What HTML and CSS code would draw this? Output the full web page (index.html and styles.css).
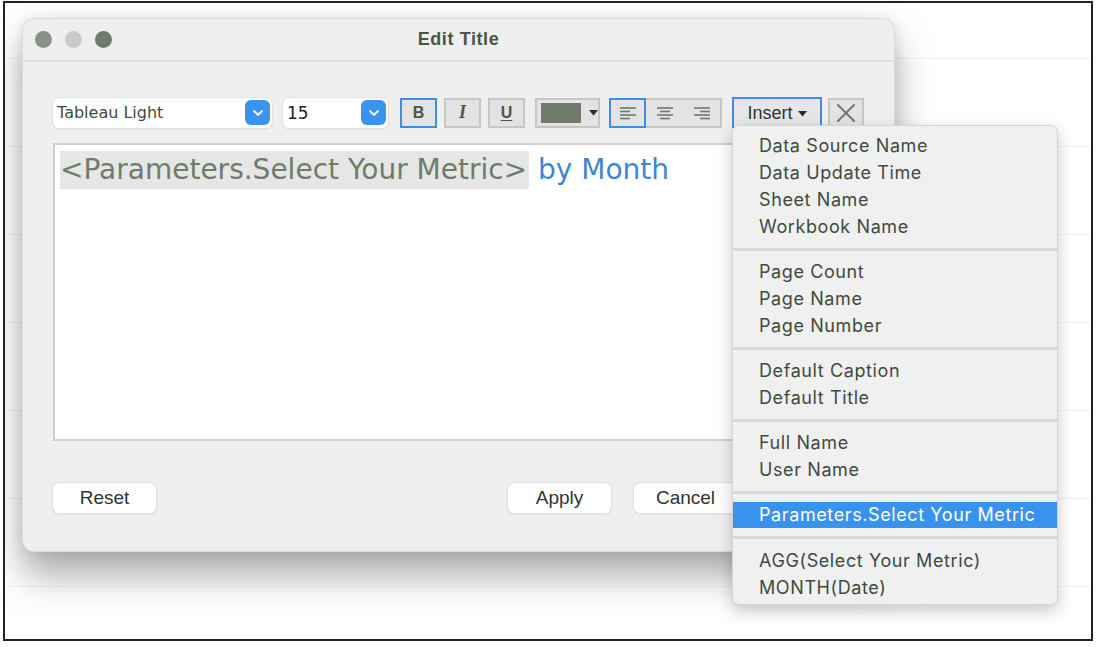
FILE: index.html
```html
<!DOCTYPE html>
<html>
<head>
<meta charset="utf-8">
<link rel="stylesheet" href="styles.css">
</head>
<body>
<div class="frame">
  <div class="window">
    <div class="titlebar">
      <div class="lights">
        <span class="light l1"></span>
        <span class="light l2"></span>
        <span class="light l3"></span>
      </div>
      <div class="title">Edit Title</div>
    </div>
    <div class="content">
      <div class="toolbar">
        <div class="select font-select">
          <span class="select-text">Tableau Light</span>
          <span class="chev"><svg width="12" height="8" viewBox="0 0 12 8"><path d="M2 2 L6 6 L10 2" fill="none" stroke="#fff" stroke-width="1.8" stroke-linecap="round" stroke-linejoin="round"/></svg></span>
        </div>
        <div class="select size-select">
          <span class="select-text size-text">15</span>
          <span class="chev"><svg width="12" height="8" viewBox="0 0 12 8"><path d="M2 2 L6 6 L10 2" fill="none" stroke="#fff" stroke-width="1.8" stroke-linecap="round" stroke-linejoin="round"/></svg></span>
        </div>
        <div class="tbtn active"><span class="b">B</span></div>
        <div class="tbtn"><span class="i">I</span></div>
        <div class="tbtn"><span class="u">U</span></div>
        <div class="tbtn color-btn">
          <span class="swatch"></span>
          <svg width="9" height="6" viewBox="0 0 9 6"><path d="M0 0 L9 0 L4.5 5.5 Z" fill="#2b2b2b"/></svg>
        </div>
        <div class="align-group">
          <div class="abtn active">
            <svg width="20" height="14" viewBox="0 0 20 14"><g stroke="#6b7b68" stroke-width="1.6"><path d="M2 2H18"/><path d="M2 5.5H12"/><path d="M2 9H18"/><path d="M2 12.5H12"/></g></svg>
          </div>
          <div class="abtn">
            <svg width="20" height="14" viewBox="0 0 20 14"><g stroke="#6b7b68" stroke-width="1.6"><path d="M2 2H18"/><path d="M5 5.5H15"/><path d="M2 9H18"/><path d="M5 12.5H15"/></g></svg>
          </div>
          <div class="abtn">
            <svg width="20" height="14" viewBox="0 0 20 14"><g stroke="#6b7b68" stroke-width="1.6"><path d="M2 2H18"/><path d="M8 5.5H18"/><path d="M2 9H18"/><path d="M8 12.5H18"/></g></svg>
          </div>
        </div>
        <div class="insert-btn">Insert <svg width="9" height="6" viewBox="0 0 9 6"><path d="M0 0 L9 0 L4.5 5.5 Z" fill="#2b2b2b"/></svg></div>
        <div class="tbtn x-btn">
          <svg width="22" height="22" viewBox="0 0 22 22"><g stroke="#6b7b68" stroke-width="2" stroke-linecap="round"><path d="M3 3 L19 19"/><path d="M19 3 L3 19"/></g></svg>
        </div>
      </div>
      <div class="editor">
        <span class="param">&lt;Parameters.Select Your Metric&gt;</span> <span class="month">by Month</span>
      </div>
      <div class="actions">
        <div class="btn">Reset</div>
        <div class="spacer"></div>
        <div class="btn">Apply</div>
        <div class="btn">Cancel</div>
      </div>
    </div>
  </div>

  <div class="menu">
    <div class="item">Data Source Name</div>
    <div class="item">Data Update Time</div>
    <div class="item">Sheet Name</div>
    <div class="item">Workbook Name</div>
    <div class="sep"></div>
    <div class="item">Page Count</div>
    <div class="item">Page Name</div>
    <div class="item">Page Number</div>
    <div class="sep"></div>
    <div class="item">Default Caption</div>
    <div class="item">Default Title</div>
    <div class="sep"></div>
    <div class="item">Full Name</div>
    <div class="item">User Name</div>
    <div class="sep sep-wide"></div>
    <div class="item selected">Parameters.Select Your Metric</div>
    <div class="sep sep-wide"></div>
    <div class="item">AGG(Select Your Metric)</div>
    <div class="item">MONTH(Date)</div>
  </div>
</div>
</body>
</html>
```

FILE: styles.css
```css
* { box-sizing: border-box; }
html, body { margin: 0; padding: 0; background: #fff; }
body {
  font-family: "Liberation Sans", Arial, sans-serif;
  color: #3f4a3d;
}
.frame {
  position: relative;
  margin: 1px 0 0 3px;
  width: 1090px;
  height: 640px;
  border: 2px solid #222;
  padding: 15px 0 0 17px;
  overflow: hidden;
  background:
    repeating-linear-gradient(to bottom, transparent 0, transparent 55px, #f1f1f1 55px, #f1f1f1 56px, transparent 56px, transparent 88px),
    #fff;
}
.window {
  width: 873px;
  height: 534px;
  background: #efefef;
  border: 1px solid #dcdcdc;
  border-radius: 12px;
  box-shadow: 0 24px 36px rgba(100, 106, 100, 0.55), 0 0 14px rgba(0,0,0,0.10);
  display: flex;
  flex-direction: column;
}
.titlebar {
  height: 43px;
  border-bottom: 2px solid #dedede;
  display: flex;
  align-items: center;
  position: relative;
  padding-left: 12px;
}
.lights { display: flex; gap: 13px; }
.light { width: 17px; height: 17px; border-radius: 50%; display: block; }
.l1 { background: #8a8f89; }
.l2 { background: #c9cac9; }
.l3 { background: #6e7c69; }
.title {
  position: absolute;
  left: 0; right: 0; top: 0; bottom: 0;
  display: flex; align-items: center; justify-content: center;
  font-weight: bold;
  font-size: 18px;
  letter-spacing: 0.6px;
  color: #4a5548;
  pointer-events: none;
}
.content {
  padding: 35px 30px 0 30px;
  display: flex;
  flex-direction: column;
}
.toolbar {
  display: flex;
  align-items: center;
  height: 31px;
}
.select {
  height: 30px;
  background: #fff;
  border-radius: 6px;
  box-shadow: 0 0 0 1px #e2e2e2, 0 1px 2px rgba(0,0,0,0.12);
  display: flex;
  align-items: center;
  justify-content: space-between;
  padding: 0 2px 0 4px;
}
.font-select { width: 219px; }
.size-select { width: 105px; margin-left: 11px; }
.select-text { font-family: "DejaVu Sans", sans-serif; font-size: 16px; color: #3f4a3d; }
.size-text { color: #222; font-size: 17px; }
.chev {
  width: 25px; height: 25px;
  background: #3a93f2;
  border-radius: 6px;
  display: flex; align-items: center; justify-content: center;
}
.tbtn {
  width: 37px; height: 30px;
  background: #e3e3e3;
  border: 2px solid #c6c6c6;
  display: flex; align-items: center; justify-content: center;
  margin-left: 7px;
  color: #4a5548;
  font-size: 16px;
}
.tbtn.active { border-color: #3b8fe8; margin-left: 12px; }
.b { font-weight: bold; }
.i { font-style: italic; font-weight: bold; font-family: "Liberation Serif", serif; font-size: 18px; }
.u { text-decoration: underline; font-weight: bold; text-underline-offset: 2px; }
.color-btn {
  width: 65px;
  margin-left: 10px;
  justify-content: flex-start;
  padding-left: 4px;
  gap: 8px;
}
.swatch { width: 40px; height: 20px; background: #6e7c69; display: block; }
.align-group {
  display: flex;
  margin-left: 9px;
  background: #e3e3e3;
  border: 2px solid #c6c6c6;
  height: 30px;
}
.abtn {
  width: 37px;
  height: 30px;
  margin: -2px 0;
  display: flex; align-items: center; justify-content: center;
  border: 2px solid transparent;
}
.abtn:first-child { margin-left: -2px; }
.abtn.active { border-color: #3b8fe8; }
.insert-btn {
  margin-left: 10px;
  width: 90px; height: 31px;
  background: #e6e6e6;
  border: 2px solid #3b8fe8;
  border-bottom: none;
  display: flex; align-items: center; justify-content: center;
  gap: 5px;
  font-size: 18px;
  color: #2f352e;
}
.x-btn { width: 36px; margin-left: 6px; }
.editor {
  margin-top: 15px;
  height: 298px;
  background: #fff;
  border: 2px solid #cfcfcf;
  padding: 6px 5px;
  font-family: "DejaVu Sans", sans-serif;
  font-size: 28px;
  line-height: 38px;
  white-space: nowrap;
}
.param { background: #e6e6e6; color: #6e7c69; display: inline-block; padding-right: 2px; }
.month { color: #3d86d1; }
.actions {
  margin-top: 42px;
  display: flex;
  gap: 23px;
}
.spacer { flex: 1; }
.btn {
  width: 103px; height: 30px;
  background: #fff;
  border-radius: 6px;
  box-shadow: 0 0 0 1px #e0e0e0, 0 1px 2px rgba(0,0,0,0.15);
  display: flex; align-items: center; justify-content: center;
  font-size: 19px;
  color: #2f352e;
}
.actions .btn:last-child { margin-right: 127px; }
.menu {
  position: absolute;
  left: 727px;
  top: 122px;
  width: 326px;
  background: #f0f0f0;
  border: 1px solid #d4d4d4;
  border-radius: 7px;
  box-shadow: 0 6px 16px rgba(0,0,0,0.22);
  padding: 6px 0 3px;
}
.item {
  height: 27px;
  line-height: 27px;
  padding-left: 26px;
  font-family: Inter, "Liberation Sans", sans-serif;
  font-size: 18px;
  color: #3f4a3d;
  letter-spacing: 0.6px;
}
.item.selected { background: #3a92ef; color: #fff; height: 26px; line-height: 26px; }
.sep {
  height: 3px;
  background: #d8d8d8;
  margin: 8px 0 7px;
}
.sep-wide { margin: 8px 0 8px; }
```
